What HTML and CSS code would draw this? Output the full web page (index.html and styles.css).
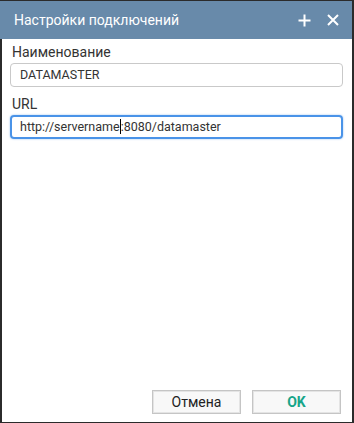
FILE: index.html
```html
<!DOCTYPE html>
<html lang="ru">
<head>
<meta charset="utf-8">
<link rel="stylesheet" href="styles.css">
</head>
<body>
<div class="dialog">
  <div class="titlebar">
    <span class="title">Настройки подключений</span>
    <div class="tools">
      <svg class="icon" width="13" height="13" viewBox="0 0 13 13"><path d="M6.5 0.5v12M0.5 6.5h12" stroke="#fff" stroke-width="2" fill="none"/></svg>
      <svg class="icon" width="12" height="12" viewBox="0 0 12 12"><path d="M1 1l10 10M11 1L1 11" stroke="#fff" stroke-width="2" fill="none"/></svg>
    </div>
  </div>
  <div class="body">
    <div class="field">
      <div class="label">Наименование</div>
      <div class="input">DATAMASTER</div>
    </div>
    <div class="field">
      <div class="label">URL</div>
      <div class="input focused">http://servername<span class="caret"></span>:8080/datamaster</div>
    </div>
  </div>
  <div class="footer">
    <button class="btn">Отмена</button>
    <button class="btn ok">OK</button>
  </div>
</div>
</body>
</html>
```
FILE: styles.css
```css
html, body { margin: 0; padding: 0; }
body {
  background: #2b2b2b;
  width: 354px;
  height: 423px;
  font-family: Roboto, "Noto Sans", sans-serif;
  font-size: 13px;
  color: #333;
}
.dialog {
  margin: 1px 2px 1px 2px;
  width: 350px;
  height: 421px;
  background: #fff;
  display: flex;
  flex-direction: column;
}
.titlebar {
  height: 38px;
  background: #688aaa;
  display: flex;
  align-items: center;
  justify-content: space-between;
  padding: 0 13px 0 14px;
  box-sizing: border-box;
  margin-left: -2px;
}
.title {
  color: #fff;
  font-size: 14px;
}
.tools { display: flex; align-items: center; gap: 16px; }
.icon { display: block; }
.body {
  flex: 1;
  padding: 4px 9px 0 8px;
  display: flex;
  flex-direction: column;
  gap: 8px;
}
.label {
  font-size: 14px;
  line-height: 19px;
  color: #333;
  padding-left: 2px;
}
.input {
  height: 24px;
  border: 1px solid #c9c9c9;
  border-radius: 4px;
  box-sizing: border-box;
  padding: 0 9px;
  line-height: 22px;
  font-size: 12.5px;
  color: #333;
  margin-top: 1px;
}
.input.focused {
  border: 2px solid #4a93e8;
  line-height: 20px;
  padding: 0 8px;
  box-shadow: 0 0 2px rgba(74,147,232,0.6);
}
.caret {
  display: inline-block;
  width: 1px;
  height: 15px;
  background: #000;
  vertical-align: -3px;
}
.footer {
  display: flex;
  justify-content: flex-end;
  gap: 11px;
  padding: 0 11px 8px 0;
}
.btn {
  width: 89px;
  height: 24px;
  background: #f8f8f8;
  border: 1px solid #c5c5c5;
  box-shadow: inset 0 0 0 1px #e4e4e4;
  font-family: Roboto, "Noto Sans", sans-serif;
  font-size: 14px;
  color: #222;
  padding: 0;
}
.btn.ok {
  color: #17a589;
  font-weight: bold;
}
```
